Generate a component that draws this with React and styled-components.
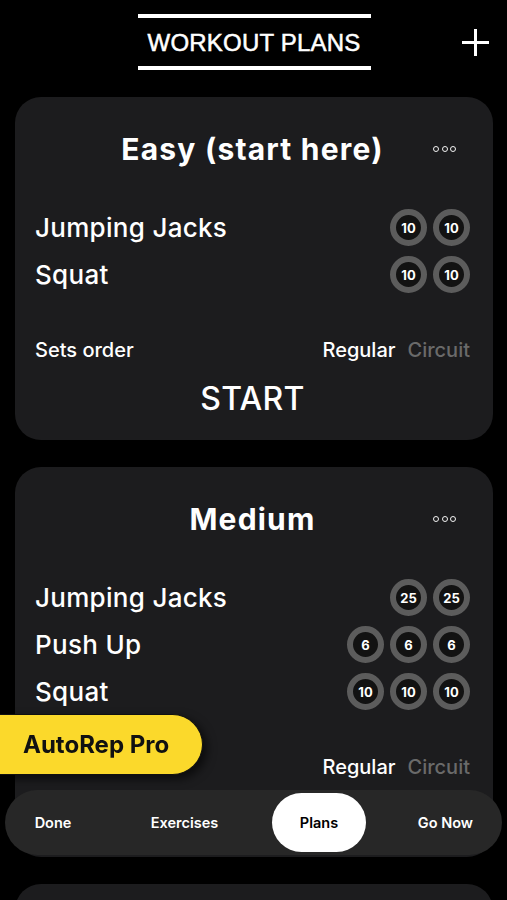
import React from 'react'
import styled, { createGlobalStyle } from 'styled-components'

const GlobalStyle = createGlobalStyle`
  html, body {
    margin: 0;
    padding: 0;
    background: #000;
  }
  body {
    font-family: Inter, "Noto Sans", sans-serif;
    color: #fff;
  }
`

const Page = styled.div`
  width: 100%;
  min-height: 100vh;
  background: #000;
  padding: 0 14px 0 15px;
  box-sizing: border-box;
  overflow: hidden;
`

const Header = styled.div`
  height: 97px;
  display: grid;
  grid-template-columns: 1fr auto 1fr;
  align-items: center;
`

const HeaderTitle = styled.h1`
  grid-column: 2;
  margin: 0;
  margin-top: -14px;
  width: 233px;
  box-sizing: border-box;
  border-top: 4px solid #fff;
  border-bottom: 4px solid #fff;
  padding: 9px 0 8px;
  text-align: center;
  font-family: "Liberation Sans", Arial, sans-serif;
  font-weight: 400;
  font-size: 24px;
  line-height: 31px;
  letter-spacing: 0.2px;
  -webkit-text-stroke: 0.5px #fff;
`

const AddButton = styled.div`
  grid-column: 3;
  justify-self: end;
  margin-top: -13px;
  margin-right: 4px;
  width: 27px;
  height: 27px;
  position: relative;
  &::before, &::after {
    content: '';
    position: absolute;
    background: #fff;
  }
  &::before {
    left: 0;
    right: 0;
    top: 12px;
    height: 3px;
  }
  &::after {
    top: 0;
    bottom: 0;
    left: 12px;
    width: 3px;
  }
`

const List = styled.div`
  display: flex;
  flex-direction: column;
  gap: 27px;
`

const Card = styled.div`
  background: #1c1c1e;
  border-radius: 26px;
  padding: 29px 23px 21px 20px;
`

const TitleRow = styled.div`
  display: grid;
  grid-template-columns: 1fr auto 1fr;
  align-items: center;
  height: 46px;
`

const PlanTitle = styled.h2`
  grid-column: 2;
  margin: 0;
  font-size: 30px;
  font-weight: 700;
  letter-spacing: 1.2px;
  white-space: nowrap;
`

const Dots = styled.div`
  grid-column: 3;
  justify-self: end;
  margin-right: 14px;
  display: flex;
  gap: 2.5px;
  span {
    width: 6px;
    height: 6px;
    box-sizing: border-box;
    border: 1.6px solid #f2f2f2;
    border-radius: 50%;
  }
`

const Exercises = styled.div`
  margin-top: 32px;
  display: flex;
  flex-direction: column;
`

const ExerciseRow = styled.div`
  height: 47px;
  display: flex;
  align-items: center;
  justify-content: space-between;
`

const ExerciseName = styled.span`
  font-size: 26px;
  font-weight: 500;
  letter-spacing: 0.3px;
`

const Sets = styled.div`
  display: flex;
  gap: 6px;
`

const SetBadge = styled.div`
  width: 37px;
  height: 37px;
  box-sizing: border-box;
  border-radius: 50%;
  border: 6px solid #5c5c5c;
  background: #121212;
  display: flex;
  align-items: center;
  justify-content: center;
  font-size: 13px;
  font-weight: 700;
`

const OrderRow = styled.div`
  margin-top: 37px;
  height: 30px;
  display: flex;
  align-items: center;
  justify-content: space-between;
  font-size: 20px;
  font-weight: 500;
`

const OrderOptions = styled.div`
  display: flex;
  gap: 12px;
`

const OrderOption = styled.span`
  color: ${p => (p.$active ? '#fff' : '#6a6a6a')};
`

const StartButton = styled.div`
  margin-top: 14px;
  height: 40px;
  line-height: 40px;
  text-align: center;
  font-size: 32px;
  font-weight: 500;
  letter-spacing: 0.3px;
`

const ProBadge = styled.div`
  position: fixed;
  left: 0;
  top: 714px;
  width: 203px;
  height: 61px;
  box-sizing: border-box;
  padding-left: 23px;
  display: flex;
  align-items: center;
  background: #fbd92b;
  color: #111;
  border: 1px solid #111;
  border-left: none;
  border-radius: 0 31px 31px 0;
  font-size: 24px;
  font-weight: 700;
  box-shadow: 4px 4px 10px rgba(0, 0, 0, 0.6);
`

const NavBar = styled.nav`
  position: fixed;
  left: 5px;
  right: 5px;
  top: 790px;
  height: 65px;
  border-radius: 33px;
  background: #272727;
  display: grid;
  grid-template-columns: 88px 175px 94px 1fr;
  align-items: center;
  padding: 0 4px;
  box-sizing: border-box;
`

const NavItem = styled.div`
  height: 59px;
  display: flex;
  align-items: center;
  justify-content: center;
  font-size: 14.5px;
  font-weight: 600;
  border-radius: 30px;
  color: ${p => (p.$active ? '#000' : '#fff')};
  background: ${p => (p.$active ? '#fff' : 'transparent')};
  &:last-child {
    justify-content: flex-end;
    padding-right: 25px;
  }
`

const plans = [
  {
    name: 'Easy (start here)',
    exercises: [
      { name: 'Jumping Jacks', sets: [10, 10] },
      { name: 'Squat', sets: [10, 10] },
    ],
  },
  {
    name: 'Medium',
    exercises: [
      { name: 'Jumping Jacks', sets: [25, 25] },
      { name: 'Push Up', sets: [6, 6, 6] },
      { name: 'Squat', sets: [10, 10, 10] },
    ],
  },
  {
    name: 'Hard',
    exercises: [
      { name: 'Jumping Jacks', sets: [40, 40, 40] },
      { name: 'Push Up', sets: [10, 10, 10] },
      { name: 'Squat', sets: [20, 20, 20] },
    ],
  },
]

const navItems = ['Done', 'Exercises', 'Plans', 'Go Now']

const App = () => {
  return (
    <>
      <GlobalStyle />
      <Page>
        <Header>
          <HeaderTitle>WORKOUT PLANS</HeaderTitle>
          <AddButton />
        </Header>
        <List>
          {plans.map(plan => (
            <Card key={plan.name}>
              <TitleRow>
                <PlanTitle>{plan.name}</PlanTitle>
                <Dots>
                  <span />
                  <span />
                  <span />
                </Dots>
              </TitleRow>
              <Exercises>
                {plan.exercises.map((ex, i) => (
                  <ExerciseRow key={i}>
                    <ExerciseName>{ex.name}</ExerciseName>
                    <Sets>
                      {ex.sets.map((s, j) => (
                        <SetBadge key={j}>{s}</SetBadge>
                      ))}
                    </Sets>
                  </ExerciseRow>
                ))}
              </Exercises>
              <OrderRow>
                <span>Sets order</span>
                <OrderOptions>
                  <OrderOption $active>Regular</OrderOption>
                  <OrderOption>Circuit</OrderOption>
                </OrderOptions>
              </OrderRow>
              <StartButton>START</StartButton>
            </Card>
          ))}
        </List>
      </Page>
      <ProBadge>AutoRep Pro</ProBadge>
      <NavBar>
        {navItems.map(item => (
          <NavItem key={item} $active={item === 'Plans'}>
            {item}
          </NavItem>
        ))}
      </NavBar>
    </>
  )
}

export default App
